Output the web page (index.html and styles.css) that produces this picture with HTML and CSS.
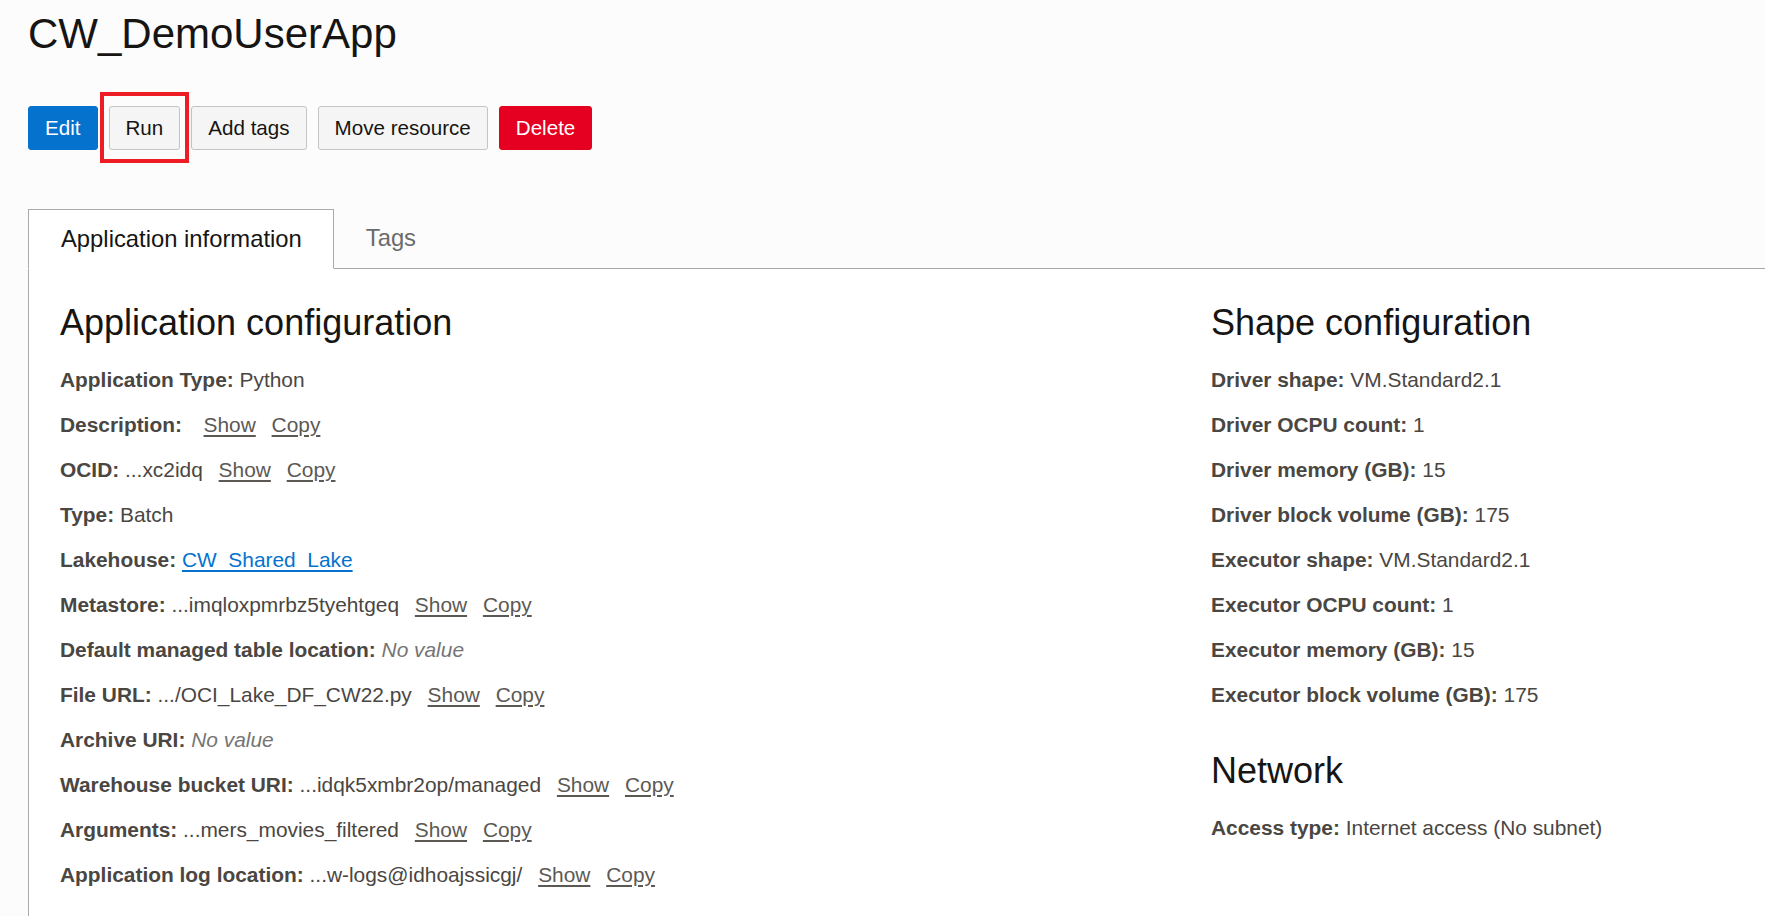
FILE: index.html
```html
<!DOCTYPE html>
<html lang="en">
<head>
<meta charset="utf-8">
<title>CW_DemoUserApp</title>
<link rel="stylesheet" href="styles.css">
</head>
<body>
<div class="page">
  <h1 class="title">CW_DemoUserApp</h1>
  <div class="actions">
    <button class="btn btn-primary">Edit</button>
    <span class="highlight-wrap"><button class="btn">Run</button><span class="highlight"></span></span>
    <button class="btn">Add tags</button>
    <button class="btn">Move resource</button>
    <button class="btn btn-danger">Delete</button>
  </div>
  <div class="tabs">
    <div class="tab tab-active">Application information</div>
    <div class="tab">Tags</div>
    <div class="tab-fill"></div>
  </div>
  <div class="panel">
    <section class="col">
      <h2 class="section-title">Application configuration</h2>
      <div class="row"><b>Application Type:</b> Python</div>
      <div class="row"><b>Description:</b> <span class="empty"></span> <a class="act">Show</a> <a class="act">Copy</a></div>
      <div class="row"><b>OCID:</b> ...xc2idq <a class="act">Show</a> <a class="act">Copy</a></div>
      <div class="row"><b>Type:</b> Batch</div>
      <div class="row"><b>Lakehouse:</b> <a class="link">CW_Shared_Lake</a></div>
      <div class="row"><b>Metastore:</b> ...imqloxpmrbz5tyehtgeq <a class="act">Show</a> <a class="act">Copy</a></div>
      <div class="row"><b>Default managed table location:</b> <i class="none">No value</i></div>
      <div class="row"><b>File URL:</b> .../OCI_Lake_DF_CW22.py <a class="act">Show</a> <a class="act">Copy</a></div>
      <div class="row"><b>Archive URI:</b> <i class="none">No value</i></div>
      <div class="row"><b>Warehouse bucket URI:</b> ...idqk5xmbr2op/managed <a class="act">Show</a> <a class="act">Copy</a></div>
      <div class="row"><b>Arguments:</b> ...mers_movies_filtered <a class="act">Show</a> <a class="act">Copy</a></div>
      <div class="row"><b>Application log location:</b> ...w-logs@idhoajssicgj/ <a class="act">Show</a> <a class="act">Copy</a></div>
    </section>
    <section class="col">
      <h2 class="section-title">Shape configuration</h2>
      <div class="row"><b>Driver shape:</b> VM.Standard2.1</div>
      <div class="row"><b>Driver OCPU count:</b> 1</div>
      <div class="row"><b>Driver memory (GB):</b> 15</div>
      <div class="row"><b>Driver block volume (GB):</b> 175</div>
      <div class="row"><b>Executor shape:</b> VM.Standard2.1</div>
      <div class="row"><b>Executor OCPU count:</b> 1</div>
      <div class="row"><b>Executor memory (GB):</b> 15</div>
      <div class="row"><b>Executor block volume (GB):</b> 175</div>
      <h2 class="section-title section-next">Network</h2>
      <div class="row"><b>Access type:</b> Internet access (No subnet)</div>
    </section>
  </div>
</div>
</body>
</html>
```
FILE: styles.css
```css
* { box-sizing: border-box; }
html, body {
  margin: 0;
  padding: 0;
  background: #fcfcfc;
  font-family: "Liberation Sans", Arial, sans-serif;
  color: #4a4642;
  overflow: hidden;
}
.page {
  padding: 0 0 0 28px;
  height: 916px;
  display: flex;
  flex-direction: column;
}
.title {
  margin: 0;
  padding-top: 10px;
  height: 106px;
  font-size: 42px;
  line-height: 48px;
  font-weight: 400;
  color: #161513;
}
.actions {
  display: flex;
  align-items: center;
  gap: 11px;
  height: 44px;
}
.btn {
  font-family: "Liberation Sans", Arial, sans-serif;
  font-size: 20.6px;
  height: 44px;
  padding: 0 16px;
  border: 1px solid #c4c4c4;
  border-radius: 3px;
  background: #f5f5f5;
  color: #161513;
  cursor: pointer;
}
.btn-primary {
  background: #0572ce;
  border-color: #0572ce;
  color: #fff;
}
.btn-danger {
  background: #e50021;
  border-color: #e50021;
  color: #fff;
}
.highlight-wrap {
  position: relative;
  display: inline-flex;
}
.highlight {
  position: absolute;
  left: -9px;
  right: -9px;
  top: -14px;
  bottom: -13px;
  border: 4px solid #ee1c25;
  pointer-events: none;
}
.tabs {
  display: flex;
  margin-top: 59px;
  height: 60px;
}
.tab {
  padding: 0 31px 0 32px;
  font-size: 23.8px;
  line-height: 58px;
  color: #6b6b6b;
  border-bottom: 1px solid #aaa;
}
.tab-active {
  color: #161513;
  background: #fff;
  border: 1px solid #aaa;
  border-bottom: 1px solid #fff;
}
.tab-fill {
  flex: 1;
  border-bottom: 1px solid #aaa;
}
.panel {
  flex: 1;
  background: #fff;
  border-left: 1px solid #aaa;
  display: grid;
  grid-template-columns: 1151px 1fr;
  padding: 30px 0 0 31px;
}
.section-title {
  margin: 0;
  font-size: 36px;
  line-height: 48px;
  font-weight: 400;
  color: #161513;
  height: 58px;
}
.section-next {
  margin-top: 30px;
}
.row {
  font-size: 20.9px;
  line-height: 45px;
  white-space: nowrap;
  color: #4a4642;
}
.row b {
  font-weight: 700;
  color: #4a4642;
}
.empty {
  display: inline-block;
  width: 0;
}
.act {
  margin-left: 10px;
  color: #5c5955;
  text-decoration: underline;
  text-underline-offset: 3px;
  cursor: pointer;
}
.link {
  color: #0572ce;
  text-decoration: underline;
  text-underline-offset: 3px;
  cursor: pointer;
}
.none {
  color: #757575;
}
```
